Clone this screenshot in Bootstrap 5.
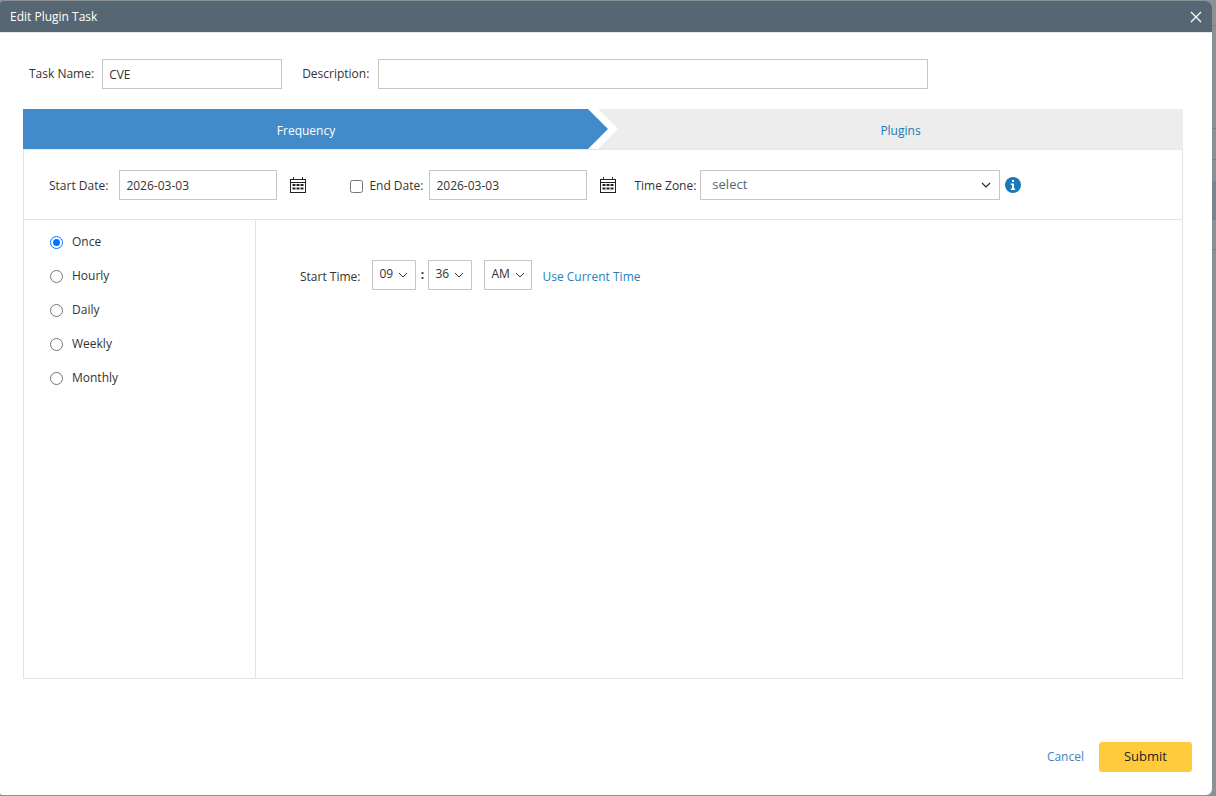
<!DOCTYPE html>
<html lang="en">
<head>
<meta charset="utf-8">
<title>Edit Plugin Task</title>
<link href="https://cdn.jsdelivr.net/npm/bootstrap@5.3.0/dist/css/bootstrap.min.css" rel="stylesheet">
<style>
html,body{height:796px;overflow:hidden}
body{background-color:#8a9296;background-image:linear-gradient(to bottom,#8a9296 25px,#7a8084 25px,#7a8084 26px,#8a9296 26px,#8a9296 128px,#7a8084 128px,#7a8084 129px,#8a9296 129px,#8a9296 159px,#7a8084 159px,#7a8084 160px,#8a9296 160px,#8a9296 181px,#76858e 181px,#76858e 220px,#8a9296 220px,#8a9296 249px,#7a8084 249px,#7a8084 250px,#8a9296 250px);font-family:"Open Sans",sans-serif;font-size:12px;color:#333;padding-top:1px}
.dlg{width:1212px;height:794px;background:#fff;border-radius:2px 6px 6px 2px;display:flex;flex-direction:column}
.dlg-head{height:31px;background:#566773;color:#fff;border-radius:2px 6px 0 0;padding:0 10px;flex:none;font-size:12px;margin-bottom:1px;box-shadow:0 1px 0 #e4e7e9}
.x-btn{width:14px;height:14px;margin-right:-1px;display:block}
.dlg-body{flex:1;padding:0 29px 0 23px;display:flex;flex-direction:column}
.name-row{height:76px;padding:6px 0 0 6px;flex:none}
.fld{height:30px;border:1px solid #c6c6c6;background:#fff;padding:0 6px;color:#333;font-size:12px;border-radius:0;outline:0;font-family:inherit}
.w-name{width:180px;margin:0 20px 0 8px}
.w-desc{width:550px;margin-left:9px}
.steps{height:40px;background:#ededed;position:relative;flex:none}
.step-a{width:585px;background:#428bca;color:#fff;clip-path:polygon(0 0,565px 0,585px 20px,565px 100%,0 100%);padding:4px 19px 0 0}
.step-white{position:absolute;left:565px;top:0;width:30px;height:40px;background:#fff;clip-path:polygon(0 0,10px 0,30px 20px,10px 100%,0 100%);z-index:0}
.step-tab{height:40px;position:relative;z-index:1}
.step-b{flex:1;color:#1a7ab5;padding:4px 0 0 10px}
.framed{flex:1;border:1px solid #e3e3e3;border-top:0;box-shadow:inset 0 1px 0 #e8e8e8;display:flex;flex-direction:column;min-height:0}
.date-row{height:71px;border-bottom:1px solid #e3e3e3;padding:2px 0 0 25px;flex:none}
.lbl-low{padding-top:2px}
.w-date{width:158px;margin-left:11px}
.cal{width:16px;height:16px;display:block;margin-left:13px}
.chk{width:13px;height:13px;border:1px solid #767676;border-radius:2.5px;background:#fff;margin:2px 6px 0 44px;appearance:none;display:block}
.end-lbl{margin-right:6px}
.tz-lbl{margin-left:18px}
.tz{width:300px;margin-left:4px;padding:0 8px 0 11px;color:#566773;justify-content:space-between;font-size:13px}
.info{width:16px;height:16px;margin-left:5px;display:block}
.panes{flex:1;min-height:0}
.side{width:232px;border-right:1px solid #e3e3e3;padding:5px 0 0 26px;flex:none}
.opt{height:34px}
.rad{width:13px;height:13px;border:1px solid #767676;border-radius:50%;margin-right:9px;flex:none;background:#fff}
.rad.on{border:1px solid #0075ff;padding:2px;background:#0075ff content-box}
.main-pane{padding:40px 0 0 44px}
.time-row{height:30px}
.low{padding-top:4px}
.sel{height:30px;border:1px solid #c6c6c6;padding:0 6px;color:#333;gap:5px;line-height:1}
.sel span{margin-top:-3px}
.chev{width:10px;height:6px;display:block;flex:none}
.w-h{width:44px}
.w-ap{width:48px}
.colon{width:12px;text-align:center;font-weight:700;color:#333}
.lnk{color:#2a80b9;text-decoration:none}
.foot{height:116px;flex:none;padding:63px 0 0}
.foot .lnk{color:#3d85c0;margin-right:15px}
.btn-go{width:93px;height:30px;background:#ffcb3d;border:0;border-radius:3px;color:#222;font-size:13px;padding:0;font-family:inherit}
.foot-in{margin-right:-9px}
.gap-am{margin-left:12px;margin-right:10px}
</style>
</head>
<body>
<div class="dlg">
  <div class="dlg-head d-flex align-items-center justify-content-between">
    <span>Edit Plugin Task</span>
    <svg class="x-btn" viewBox="0 0 14 14" fill="none" stroke="#fff" stroke-width="1.3"><path d="M2 2l10 10M12 2L2 12"/></svg>
  </div>
  <div class="dlg-body">
    <div class="name-row d-flex align-items-center">
      <span>Task Name:</span><input class="fld w-name" value="CVE" aria-label="Task Name">
      <span>Description:</span><input class="fld w-desc" aria-label="Description">
    </div>
    <div class="steps d-flex">
      <div class="step-white"></div>
      <div class="step-tab step-a d-flex align-items-center justify-content-center">Frequency</div>
      <div class="step-tab step-b d-flex align-items-center justify-content-center">Plugins</div>
    </div>
    <div class="framed">
      <div class="date-row d-flex align-items-center">
        <span class="lbl-low">Start Date:</span><input class="fld w-date" value="2026-03-03" aria-label="Start Date">
        <svg class="cal" viewBox="0 0 16 16"><path fill="#222" fill-rule="evenodd" d="M3 0h1v2h8V0h1v2h3v14H0V2h3zM1 3v2h14V3zm0 3v9h14V6z"/><path fill="#222" d="M2.500 7h3v2h-3zM6.500 7h3v2h-3zM10.500 7h3v2h-3zM2.500 10.500h3v2h-3zM6.500 10.500h3v2h-3zM10.500 10.500h3v2h-3z"/></svg>
        <input type="checkbox" class="chk" aria-label="End Date"><span class="end-lbl lbl-low">End Date:</span>
        <input class="fld w-date ms-0" value="2026-03-03" aria-label="End Date value">
        <svg class="cal" viewBox="0 0 16 16"><path fill="#222" fill-rule="evenodd" d="M3 0h1v2h8V0h1v2h3v14H0V2h3zM1 3v2h14V3zm0 3v9h14V6z"/><path fill="#222" d="M2.500 7h3v2h-3zM6.500 7h3v2h-3zM10.500 7h3v2h-3zM2.500 10.500h3v2h-3zM6.500 10.500h3v2h-3zM10.500 10.500h3v2h-3z"/></svg>
        <span class="tz-lbl lbl-low">Time Zone:</span>
        <div class="fld tz d-flex align-items-center"><span>select</span><svg class="chev" viewBox="0 0 10 6" fill="none" stroke="#222" stroke-width="1.100"><path d="M1 1l4 4 4-4"/></svg></div>
        <svg class="info" viewBox="0 0 16 16"><circle cx="8" cy="8" r="8" fill="#1a7ab5"/><path fill="#fff" d="M7 3h2v2H7zM5.800 6.500H9v5h1.200V13H5.800v-1.500H7V8H5.800z"/></svg>
      </div>
      <div class="panes d-flex">
        <div class="side">
          <div class="opt d-flex align-items-center"><span class="rad on"></span>Once</div>
          <div class="opt d-flex align-items-center"><span class="rad"></span>Hourly</div>
          <div class="opt d-flex align-items-center"><span class="rad"></span>Daily</div>
          <div class="opt d-flex align-items-center"><span class="rad"></span>Weekly</div>
          <div class="opt d-flex align-items-center"><span class="rad"></span>Monthly</div>
        </div>
        <div class="main-pane flex-grow-1">
          <div class="time-row d-flex align-items-center">
            <span class="me-2 low">Start Time:</span>
            <div class="sel w-h d-flex align-items-center ms-1"><span>09</span><svg class="chev" viewBox="0 0 10 6" fill="none" stroke="#333" stroke-width="1"><path d="M1 1l4 4 4-4"/></svg></div>
            <div class="colon">:</div>
            <div class="sel w-h d-flex align-items-center"><span>36</span><svg class="chev" viewBox="0 0 10 6" fill="none" stroke="#333" stroke-width="1"><path d="M1 1l4 4 4-4"/></svg></div>
            <div class="sel w-ap gap-am d-flex align-items-center"><span>AM</span><svg class="chev" viewBox="0 0 10 6" fill="none" stroke="#333" stroke-width="1"><path d="M1 1l4 4 4-4"/></svg></div>
            <a class="lnk low" href="#">Use Current Time</a>
          </div>
        </div>
      </div>
    </div>
    <div class="foot d-flex justify-content-end">
      <div class="foot-in d-flex align-items-center align-self-start">
        <a class="lnk" href="#">Cancel</a>
        <button class="btn-go" type="button">Submit</button>
      </div>
    </div>
  </div>
</div>
<script src="https://cdn.jsdelivr.net/npm/bootstrap@5.3.0/dist/js/bootstrap.bundle.min.js"></script>
</body>
</html>
